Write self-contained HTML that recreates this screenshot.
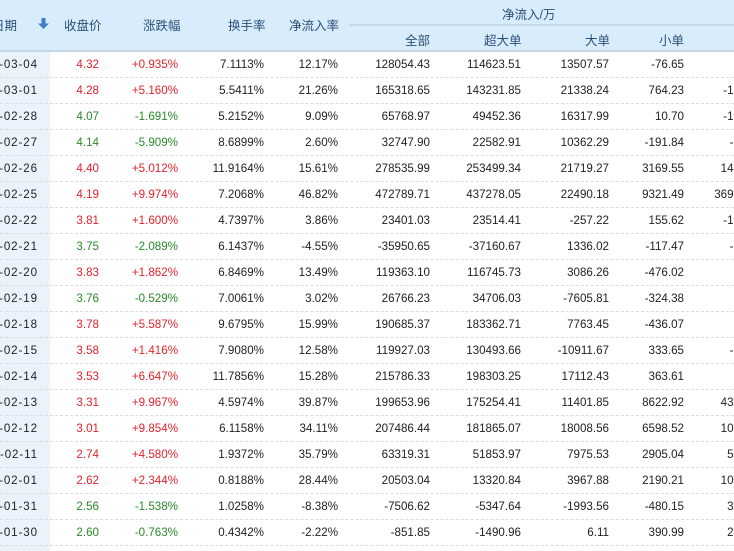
<!DOCTYPE html>
<html><head><meta charset="utf-8"><style>
*{margin:0;padding:0;box-sizing:border-box}
html,body{width:734px;height:551px;overflow:hidden}
body{background:#fff;font-family:"Liberation Sans","Noto Sans CJK SC",sans-serif;font-size:11.6px}
#wrap{position:absolute;left:0;top:0;width:734px;height:551px;overflow:hidden}
.hd{position:absolute;left:0;top:0;width:734px;height:52px;background:#d9ecfb;border-bottom:2px solid #c6d6e6}
.h{position:absolute;color:#2b4f7a;font-size:12.5px;white-space:nowrap}
.hl{position:absolute;left:349px;top:24px;width:385px;height:2px;background:#c4d8ea}
.dc{position:absolute;left:0;top:52px;width:50px;height:499px;background:#eaf3fc}
.r{position:absolute;left:0;width:734px;height:26px;border-bottom:1px dashed #dcdcdc;overflow:hidden}
.c{position:absolute;top:6px;text-align:right;white-space:nowrap;color:#222}
.dt{letter-spacing:0.9px}
.red{color:#e3232a}.grn{color:#2a8a2a}
</style></head><body><div id="wrap">
<div class="hd"></div>
<div class="dc"></div>
<div class="hl"></div>
<div class="h" style="left:-8px;top:15px">日期</div>
<svg style="position:absolute;left:38px;top:18px" width="11" height="12" viewBox="0 0 11 12"><rect x="3.5" y="0" width="4" height="6" fill="#3e7fc9"/><path d="M0 5.5H11L5.5 11Z" fill="#3e7fc9"/></svg>
<div class="h" style="left:64px;top:15px">收盘价</div>
<div class="h" style="left:143px;top:15px">涨跌幅</div>
<div class="h" style="left:228px;top:15px">换手率</div>
<div class="h" style="left:289px;top:15px">净流入率</div>
<div class="h" style="left:502px;top:4px">净流入/万</div>
<div class="h" style="left:405px;top:30px">全部</div>
<div class="h" style="left:484px;top:30px">超大单</div>
<div class="h" style="left:585px;top:30px">大单</div>
<div class="h" style="left:659px;top:30px">小单</div>
<div id="rows"></div>
</div>
<script>
var d=[
["-03-04","4.32","+0.935%","7.1113%","12.17%","128054.43","114623.51","13507.57","-76.65",""],
["-03-01","4.28","+5.160%","5.5411%","21.26%","165318.65","143231.85","21338.24","764.23","-1015.67"],
["-02-28","4.07","-1.691%","5.2152%","9.09%","65768.97","49452.36","16317.99","10.70","-1012.34"],
["-02-27","4.14","-5.909%","8.6899%","2.60%","32747.90","22582.91","10362.29","-191.84","-812.34"],
["-02-26","4.40","+5.012%","11.9164%","15.61%","278535.99","253499.34","21719.27","3169.55","14567.89"],
["-02-25","4.19","+9.974%","7.2068%","46.82%","472789.71","437278.05","22490.18","9321.49","369012.34"],
["-02-22","3.81","+1.600%","4.7397%","3.86%","23401.03","23514.41","-257.22","155.62","-1015.67"],
["-02-21","3.75","-2.089%","6.1437%","-4.55%","-35950.65","-37160.67","1336.02","-117.47","-912.34"],
["-02-20","3.83","+1.862%","6.8469%","13.49%","119363.10","116745.73","3086.26","-476.02",""],
["-02-19","3.76","-0.529%","7.0061%","3.02%","26766.23","34706.03","-7605.81","-324.38",""],
["-02-18","3.78","+5.587%","9.6795%","15.99%","190685.37","183362.71","7763.45","-436.07",""],
["-02-15","3.58","+1.416%","7.9080%","12.58%","119927.03","130493.66","-10911.67","333.65","-912.34"],
["-02-14","3.53","+6.647%","11.7856%","15.28%","215786.33","198303.25","17112.43","363.61",""],
["-02-13","3.31","+9.967%","4.5974%","39.87%","199653.96","175254.41","11401.85","8622.92","43701.23"],
["-02-12","3.01","+9.854%","6.1158%","34.11%","207486.44","181865.07","18008.56","6598.52","10101.23"],
["-02-11","2.74","+4.580%","1.9372%","35.79%","63319.31","51853.97","7975.53","2905.04","5801.23"],
["-02-01","2.62","+2.344%","0.8188%","28.44%","20503.04","13320.84","3967.88","2190.21","10201.23"],
["-01-31","2.56","-1.538%","1.0258%","-8.38%","-7506.62","-5347.64","-1993.56","-480.15","3101.23"],
["-01-30","2.60","-0.763%","0.4342%","-2.22%","-851.85","-1490.96","6.11","390.99","2401.23"]
];
var R=[38,99,178,264,338,430,521,609,684,769];
var h='';
d.forEach(function(r,i){
 var col=r[2][0]=='+'?'red':'grn';
 h+='<div class="r" style="top:'+(52+i*26)+'px">';
 r.forEach(function(v,j){
  var cls=(j==1||j==2)?col:(j==0?'dt':'');
  h+='<div class="c '+cls+'" style="right:'+(734-R[j])+'px">'+v+'</div>';
 });
 h+='</div>';
});
document.getElementById('rows').innerHTML=h;
</script>
</body></html>
